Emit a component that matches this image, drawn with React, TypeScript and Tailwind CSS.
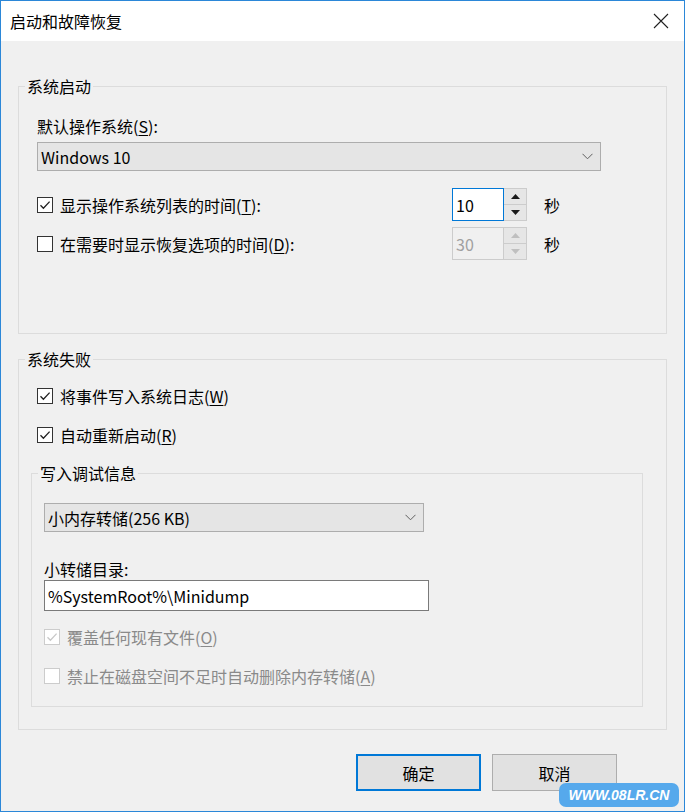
import type { ReactNode } from 'react';

const font = { fontFamily: '"Noto Sans CJK SC", "Noto Sans", sans-serif' };

function Acc({ k }: { k: string }) {
  return (
    <>
      (<span className="underline underline-offset-2">{k}</span>)
    </>
  );
}

function Check({ checked, disabled }: { checked?: boolean; disabled?: boolean }) {
  return (
    <span
      className={
        'flex h-[16px] w-[16px] shrink-0 items-center justify-center border ' +
        (disabled ? 'border-[#cccccc] bg-white' : 'border-[#333333] bg-white')
      }
    >
      {checked && (
        <svg width="12" height="12" viewBox="0 0 12 12" fill="none">
          <path
            d="M1.5 6.2 4.4 9.2 10.6 2.6"
            stroke={disabled ? '#c8c8c8' : '#202020'}
            strokeWidth="1.3"
          />
        </svg>
      )}
    </span>
  );
}

function CheckRow({
  checked,
  disabled,
  children,
}: {
  checked?: boolean;
  disabled?: boolean;
  children: ReactNode;
}) {
  return (
    <div className={'flex h-[22px] items-center ' + (disabled ? 'text-[#8a8a8a]' : 'text-black')}>
      <Check checked={checked} disabled={disabled} />
      <span className="ml-[7px] leading-[22px]">{children}</span>
    </div>
  );
}

function Chevron() {
  return (
    <svg width="11" height="7" viewBox="0 0 11 7" fill="none">
      <path d="M0.5 0.8 5.5 5.8 10.5 0.8" stroke="#606060" strokeWidth="1" />
    </svg>
  );
}

function Combo({ value, width }: { value: string; width: string }) {
  return (
    <div
      className={
        'flex h-[29px] items-center justify-between border border-[#adadad] bg-[#e5e5e5] pl-[3px] pr-[7px] ' +
        width
      }
    >
      <span className="leading-[22px]">{value}</span>
      <Chevron />
    </div>
  );
}

function Tri({ up, color }: { up?: boolean; color: string }) {
  return (
    <svg width="9" height="5" viewBox="0 0 9 5">
      <path d={up ? 'M0 5 4.5 0 9 5Z' : 'M0 0 4.5 5 9 0Z'} fill={color} />
    </svg>
  );
}

function Spinner({ value, disabled }: { value: string; disabled?: boolean }) {
  const tri = disabled ? '#bfbfbf' : '#1a1a1a';
  return (
    <div className="flex h-[33px] w-[75px]">
      <div
        className={
          'flex w-[52px] items-center border pl-[3px] ' +
          (disabled ? 'border-[#cccccc] bg-[#f0f0f0] text-[#a0a0a0]' : 'border-[#0078d7] bg-white text-black')
        }
      >
        <span className="leading-[22px]">{value}</span>
      </div>
      <div className="flex w-[23px] flex-col border border-l-0 border-[#cccccc]">
        <div className="flex flex-1 items-center justify-center border-b border-[#cccccc] bg-[#e6e6e6]">
          <Tri up color={tri} />
        </div>
        <div className="flex flex-1 items-center justify-center bg-[#e6e6e6]">
          <Tri color={tri} />
        </div>
      </div>
    </div>
  );
}

function Group({ title, className, children }: { title: string; className?: string; children: ReactNode }) {
  return (
    <fieldset className={'border border-[#dcdcdc] ' + (className ?? '')}>
      <legend className="ml-[6px] px-[2px] text-[16px] leading-[22px]">{title}</legend>
      {children}
    </fieldset>
  );
}

export default function App() {
  return (
    <div
      className="relative flex h-[812px] w-[685px] flex-col border border-[#2b87d8] bg-[#f0f0f0] text-[16px] text-black"
      style={font}
    >
      <div className="flex h-[40px] shrink-0 items-center justify-between bg-white pl-[9px] pr-[15px]">
        <span className="leading-[22px]">启动和故障恢复</span>
        <svg width="16" height="16" viewBox="0 0 16 16" fill="none">
          <path d="M1 1 15 15M15 1 1 15" stroke="#202020" strokeWidth="1.1" />
        </svg>
      </div>

      <div className="flex flex-col px-[17px] pt-[34px]">
        <Group title="系统启动">
          <div className="flex flex-col pb-[73px] pl-[18px] pt-[18px]">
            <div className="h-[22px] leading-[22px]">
              默认操作系统<Acc k="S" />:
            </div>
            <div className="mt-[5px]">
              <Combo value="Windows 10" width="w-[564px]" />
            </div>
            <div className="mt-[17px] flex items-center">
              <div className="w-[415px]">
                <CheckRow checked>
                  显示操作系统列表的时间<Acc k="T" />:
                </CheckRow>
              </div>
              <Spinner value="10" />
              <span className="ml-[17px] leading-[22px]">秒</span>
            </div>
            <div className="mt-[6px] flex items-center">
              <div className="w-[415px]">
                <CheckRow>
                  在需要时显示恢复选项的时间<Acc k="D" />:
                </CheckRow>
              </div>
              <Spinner value="30" disabled />
              <span className="ml-[17px] leading-[22px]">秒</span>
            </div>
          </div>
        </Group>

        <Group title="系统失败" className="mt-[14px]">
          <div className="flex flex-col pb-[22px] pl-[12px] pr-[23px] pt-[15px]">
            <div className="pl-[6px]">
              <CheckRow checked>
                将事件写入系统日志<Acc k="W" />
              </CheckRow>
            </div>
            <div className="mt-[17px] pl-[6px]">
              <CheckRow checked>
                自动重新启动<Acc k="R" />
              </CheckRow>
            </div>
            <Group title="写入调试信息" className="mt-[16px]">
              <div className="flex flex-col pb-[19px] pl-[12px] pt-[19px]">
                <Combo value="小内存转储(256 KB)" width="w-[380px]" />
                <div className="mt-[26px] h-[22px] leading-[22px]">小转储目录:</div>
                <div className="flex h-[31px] w-[385px] items-center border border-[#7a7a7a] bg-white pl-[3px]">
                  <span className="leading-[22px]">%SystemRoot%\Minidump</span>
                </div>
                <div className="mt-[15px]">
                  <CheckRow checked disabled>
                    覆盖任何现有文件<Acc k="O" />
                  </CheckRow>
                </div>
                <div className="mt-[17px]">
                  <CheckRow disabled>
                    禁止在磁盘空间不足时自动删除内存转储<Acc k="A" />
                  </CheckRow>
                </div>
              </div>
            </Group>
          </div>
        </Group>

        <div className="mt-[24px] flex justify-end gap-[11px] pr-[50px]">
          <button className="flex h-[37px] w-[125px] items-center justify-center border-2 border-[#0078d7] bg-[#e1e1e1]">
            确定
          </button>
          <button className="flex h-[37px] w-[125px] items-center justify-center border border-[#adadad] bg-[#e1e1e1]">
            取消
          </button>
        </div>
      </div>

      <div className="absolute bottom-[4px] right-[5px] flex h-[24px] w-[120px] items-center justify-center rounded-[7px] bg-[#56a9ec]">
        <span
          className="text-[14px] font-bold italic text-white"
          style={{ fontFamily: '"Liberation Sans", sans-serif' }}
        >
          WWW.08LR.CN
        </span>
      </div>
    </div>
  );
}
